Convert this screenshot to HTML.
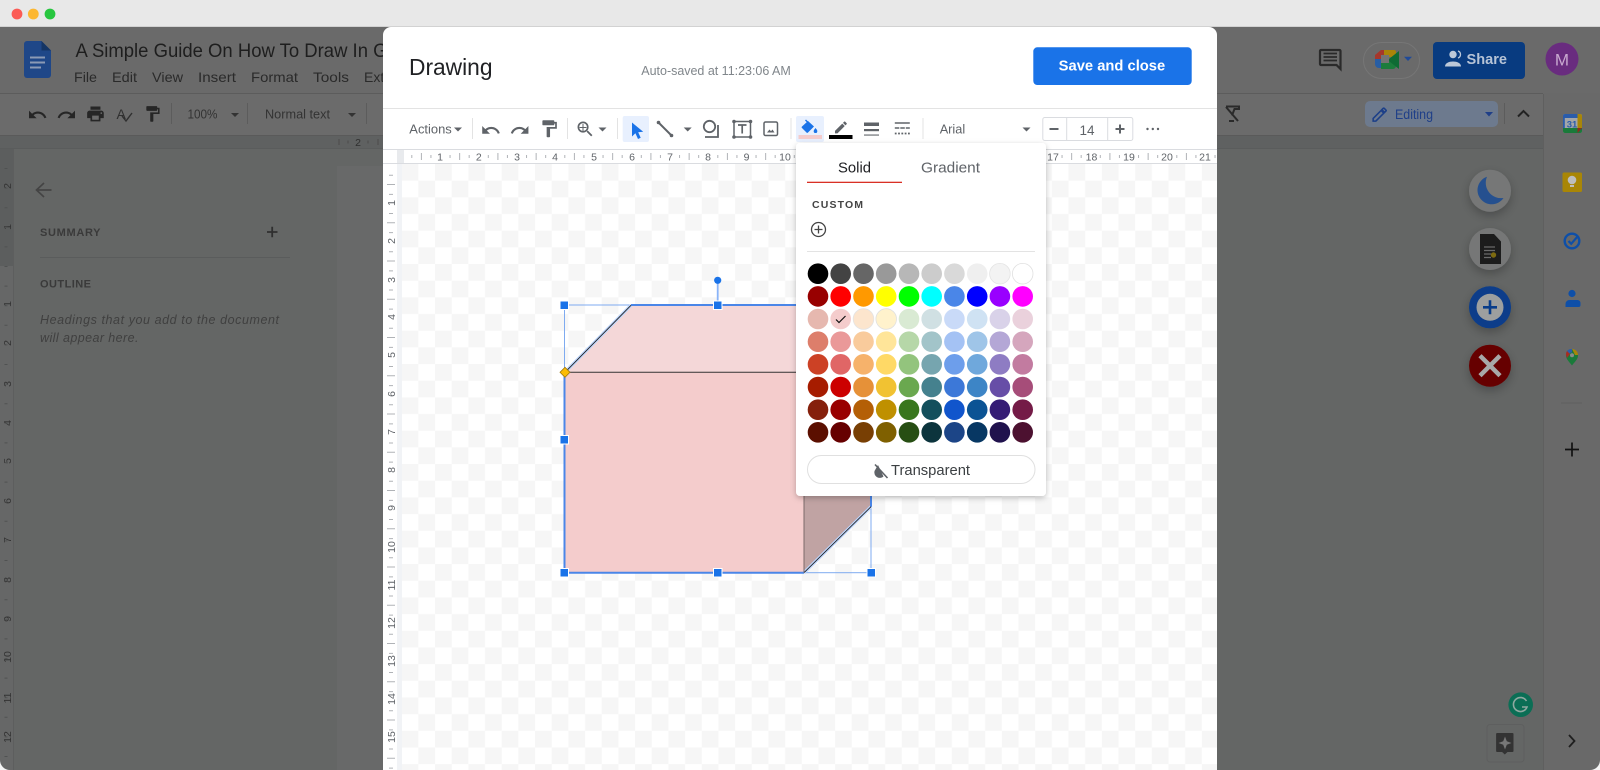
<!DOCTYPE html>
<html><head><meta charset="utf-8"><title>Drawing</title>
<style>
html,body{margin:0;padding:0;background:#646665;width:1600px;height:770px;overflow:hidden}
svg{display:block;font-family:"Liberation Sans",Arial,sans-serif}
.s circle{r:10.3px}
.rn text{font-size:10.5px;fill:#5f6368;text-anchor:middle}
.rd text{font-size:10.5px;fill:#333;text-anchor:middle}
</style></head><body>
<svg width="1600" height="770" viewBox="0 0 1600 770" xmlns="http://www.w3.org/2000/svg">
<defs>
<pattern id="chk" x="401.7" y="164" width="33.34" height="33.34" patternUnits="userSpaceOnUse">
<rect width="33.34" height="33.34" fill="#fff"/><rect width="16.67" height="16.67" fill="#f6f6f6"/><rect x="16.67" y="16.67" width="16.67" height="16.67" fill="#f6f6f6"/>
</pattern>
<filter id="sh" x="-20%" y="-20%" width="140%" height="140%"><feDropShadow dx="0" dy="2" stdDeviation="3" flood-color="#000" flood-opacity=".25"/></filter>
<filter id="sh2" x="-40%" y="-40%" width="180%" height="180%"><feDropShadow dx="0" dy="4" stdDeviation="5" flood-color="#000" flood-opacity=".25"/></filter>
</defs>

<!-- background docs -->
<rect width="1600" height="770" fill="#646665"/>
<rect y="27" width="1600" height="66" fill="#6a6a6a"/>
<rect y="93" width="1600" height="42" fill="#6b6b6b"/>
<rect y="93" width="1600" height="1" fill="#5c5c5c"/>
<rect y="135" width="1543" height="13" fill="#5f6161"/>
<rect y="135" width="1543" height="1" fill="#5a5a5a"/>
<rect y="148" width="1543" height="1" fill="#5a5c5c"/>
<rect x="1543" y="93" width="57" height="677" fill="#696969"/>
<rect x="1543" y="94" width="1" height="676" fill="#5f5f5f"/>
<rect y="149" width="13" height="621" fill="#666767"/>
<rect y="149" width="13" height="117" fill="#5c5e5e"/>
<rect x="13" y="149" width="1" height="621" fill="#5d5e5e"/>
<rect x="337" y="166" width="60" height="604" fill="#686969"/>

<!-- window bar -->
<rect width="1600" height="26" fill="#e8e8e8"/>
<rect y="26" width="1600" height="1" fill="#d2d2d2"/>
<circle cx="17" cy="14" r="5.4" fill="#fb5b55"/><circle cx="33.3" cy="14" r="5.4" fill="#fcb731"/><circle cx="50" cy="14" r="5.4" fill="#27c63f"/>

<!-- docs logo -->
<path d="M27 41h14.500L51 50.500V75a3 3 0 0 1-3 3H27a3 3 0 0 1-3-3V44a3 3 0 0 1 3-3z" fill="#1f4788"/>
<path d="M41.500 41L51 50.500h-9.500z" fill="#153564"/>
<path d="M30 56.500h15v2H30zM30 61.500h15v2H30zM30 66.500h11v2H30z" fill="#8b9ab5"/>

<!-- docs title / menus -->
<text x="75.500" y="57" font-size="19.500" fill="#1e1e1e" textLength="312" lengthAdjust="spacingAndGlyphs">A Simple Guide On How To Draw In G</text>
<g font-size="14" fill="#2a2a2a">
<text x="74" y="82" textLength="23" lengthAdjust="spacingAndGlyphs">File</text>
<text x="112" y="82" textLength="25" lengthAdjust="spacingAndGlyphs">Edit</text>
<text x="152" y="82" textLength="31" lengthAdjust="spacingAndGlyphs">View</text>
<text x="198" y="82" textLength="38" lengthAdjust="spacingAndGlyphs">Insert</text>
<text x="251" y="82" textLength="47" lengthAdjust="spacingAndGlyphs">Format</text>
<text x="313" y="82" textLength="36" lengthAdjust="spacingAndGlyphs">Tools</text>
<text x="364" y="82">Ext</text>
</g>

<!-- docs toolbar -->
<g fill="#262626">
<path transform="translate(27.300,104.700) scale(.85)" d="M12.500 8c-2.650 0-5.050.99-6.900 2.600L2 7v9h9l-3.620-3.620c1.390-1.160 3.160-1.880 5.120-1.880 3.540 0 6.550 2.310 7.600 5.500l2.370-.78C21.080 11.030 17.150 8 12.500 8z"/>
<path transform="translate(56.300,104.700) scale(.85)" d="M18.400 10.600C16.550 8.990 14.150 8 11.500 8c-4.650 0-8.580 3.030-9.960 7.220L3.900 16c1.050-3.190 4.050-5.500 7.600-5.500 1.950 0 3.730.72 5.120 1.880L13 16h9V7l-3.600 3.600z"/>
<path transform="translate(85.500,104) scale(.83)" d="M19 8H5c-1.660 0-3 1.340-3 3v6h4v4h12v-4h4v-6c0-1.660-1.340-3-3-3zm-3 11H8v-5h8v5zm3-7c-.55 0-1-.45-1-1s.45-1 1-1 1 .45 1 1-.45 1-1 1zm-1-9H6v4h12V3z"/>
<path transform="translate(143.200,104.600) scale(.78)" d="M18 4V3c0-.55-.45-1-1-1H5c-.55 0-1 .45-1 1v4c0 .55.45 1 1 1h12c.55 0 1-.45 1-1V6h1v4H9v11c0 .55.45 1 1 1h2c.55 0 1-.45 1-1v-9h8V4h-3z"/>
</g>
<text x="116.500" y="119" font-size="14" fill="#303030">A</text>
<path d="M122 116l4 5 6-8" fill="none" stroke="#303030" stroke-width="1.400"/>
<rect x="171" y="103" width="1" height="21" fill="#5c5c5c"/>
<rect x="247" y="103" width="1" height="21" fill="#5c5c5c"/>
<rect x="366" y="103" width="1" height="21" fill="#5c5c5c"/>
<text x="187.500" y="118.500" font-size="12.500" fill="#333" textLength="30" lengthAdjust="spacingAndGlyphs">100%</text>
<text x="265" y="118.500" font-size="12.500" fill="#333" textLength="65" lengthAdjust="spacingAndGlyphs">Normal text</text>
<path d="M231 113h8l-4 4zM348 113h8l-4 4z" fill="#333"/>
<text x="358" y="146" font-size="10.500" fill="#2f2f2f" text-anchor="middle">2</text>
<path d="M339 139v6M348 140.500v3M368 140.500v3M378 139v6" stroke="#4c4c4c" stroke-width="1"/>

<!-- left panel -->
<path d="M51.500 190H37M44 183l-7.500 7 7.500 7" fill="none" stroke="#444" stroke-width="1.700"/>
<text x="40" y="236" font-size="11" font-weight="bold" fill="#3a3a3a" textLength="60.500" lengthAdjust="spacing">SUMMARY</text>
<path d="M267 232h10.500M272.200 226.700v10.600" stroke="#2f2f2f" stroke-width="1.800"/>
<rect x="40" y="257" width="250" height="1" fill="#5a5c5c"/>
<text x="40" y="287.500" font-size="11" font-weight="bold" fill="#3a3a3a" textLength="51" lengthAdjust="spacing">OUTLINE</text>
<text x="40" y="324" font-size="12.500" font-style="italic" fill="#404040" textLength="239" lengthAdjust="spacing">Headings that you add to the document</text>
<text x="40" y="342" font-size="12.500" font-style="italic" fill="#404040" textLength="98.500" lengthAdjust="spacing">will appear here.</text>

<!-- left ruler -->
<g class="rd">
<text transform="translate(11,186) rotate(-90)">2</text>
<text transform="translate(11,227) rotate(-90)">1</text>
<text transform="translate(11,304) rotate(-90)">1</text>
<text transform="translate(11,343) rotate(-90)">2</text>
<text transform="translate(11,384) rotate(-90)">3</text>
<text transform="translate(11,423) rotate(-90)">4</text>
<text transform="translate(11,461) rotate(-90)">5</text>
<text transform="translate(11,501) rotate(-90)">6</text>
<text transform="translate(11,540) rotate(-90)">7</text>
<text transform="translate(11,580) rotate(-90)">8</text>
<text transform="translate(11,619) rotate(-90)">9</text>
<text transform="translate(11,657) rotate(-90)">10</text>
<text transform="translate(11,698) rotate(-90)">11</text>
<text transform="translate(11,737) rotate(-90)">12</text>
</g>
<path d="M6 168V770" stroke="#505252" stroke-width="3" stroke-dasharray="1 18.600" fill="none"/>

<!-- right top header -->
<path d="M1321 50h18.500a1 1 0 0 1 1 1v18l-4-4H1321a1 1 0 0 1-1-1v-13a1 1 0 0 1 1-1z" fill="none" stroke="#2a2a2a" stroke-width="2.200"/>
<path d="M1323.500 53.500h13.500M1323.500 57h13.500M1323.500 60.500h13.500" stroke="#2a2a2a" stroke-width="1.700"/>
<rect x="1363.500" y="42.500" width="56" height="36" rx="18" fill="none" stroke="#767676"/>
<path d="M1384 50h10a2 2 0 0 1 2 2v5h-7v-2h-5z" fill="#aa8409"/>
<path d="M1375 59h6v9h-2a4 4 0 0 1-4-4z" fill="#285ea4"/>
<path d="M1375 55l6-5v9h-6z" fill="#a6372b"/>
<path d="M1381 50h3v5h-3z" fill="#a6372b"/>
<path d="M1381 69v-6h8v-3h7v6a3 3 0 0 1-3 3h-12z" fill="#1c7c3c"/>
<rect x="1381" y="55" width="8" height="8" fill="#747474"/>
<path d="M1389 59l10-8v18l-10-8z" fill="#0f6b34"/>
<path d="M1404 56.700h8l-4 4.300z" fill="#1f4a98"/>
<rect x="1433" y="42" width="92" height="37" rx="4" fill="#083b80"/>
<circle cx="1453" cy="54.500" r="3.700" fill="#bcc8d8"/>
<path d="M1445 66.500c0-3.500 4-5 8-5s8 1.500 8 5z" fill="#bcc8d8"/>
<path d="M1458 51a3.700 3.700 0 0 1 0 7" fill="none" stroke="#bcc8d8" stroke-width="1.300"/>
<text x="1466.500" y="64" font-size="15" font-weight="bold" fill="#b6c3d6" textLength="40.500" lengthAdjust="spacingAndGlyphs">Share</text>
<circle cx="1562" cy="59" r="16.500" fill="#692c7f"/>
<text x="1562" y="65.500" font-size="17" fill="#c9a9d0" text-anchor="middle">M</text>

<!-- right toolbar -->
<path d="M1226 106.500h13v2.500h-4.500l-2.500 6.500M1226 107l12 14M1229 121h5" fill="none" stroke="#2a2a2a" stroke-width="2"/>
<rect x="1365" y="101" width="133" height="26" rx="5" fill="#6d7a8e"/>
<path transform="translate(1371,106) scale(.72)" d="M3 17.250V21h3.750L17.810 9.940l-3.750-3.750L3 17.250zM20.710 7.040c.39-.39.39-1.020 0-1.410l-2.340-2.340c-.39-.39-1.020-.39-1.410 0l-1.830 1.830 3.750 3.750 1.830-1.830z" fill="none" stroke="#1c3f88" stroke-width="2.200"/>
<text x="1395" y="119" font-size="13.500" fill="#1f3f88" textLength="38" lengthAdjust="spacingAndGlyphs">Editing</text>
<path d="M1485 112h8l-4 4.500z" fill="#1f3f88"/>
<rect x="1504" y="103" width="1" height="21" fill="#5c5c5c"/>
<path d="M1518 116.500l5.500-5.500 5.500 5.500" fill="none" stroke="#222" stroke-width="2"/>

<!-- floating buttons -->
<circle cx="1490" cy="190.700" r="21" fill="#767777" filter="url(#sh2)"/>
<path d="M1487 176.700A14.200 14.200 0 1 0 1503.500 198A15.400 15.400 0 0 1 1487 176.700z" fill="#25508f"/>
<circle cx="1490" cy="249" r="21" fill="#767777" filter="url(#sh2)"/>
<path d="M1480 234h14l7 7.500V264h-21z" fill="#1c1c1c"/>
<path d="M1484 247h11M1484 250.500h11M1484 254h7M1484 257.500h7" stroke="#6a6a6a" stroke-width="1.300"/>
<circle cx="1493.500" cy="255" r="2.700" fill="#7d6a10"/>
<circle cx="1490" cy="307.300" r="21" fill="#083c8a" filter="url(#sh2)"/>
<circle cx="1490" cy="307.300" r="13.500" fill="#9d9f9f"/>
<path d="M1483 307.300h14M1490 300.300v14" stroke="#083c8a" stroke-width="2.600"/>
<circle cx="1490" cy="365.700" r="21" fill="#660404" filter="url(#sh2)"/>
<path d="M1480 355.700l20 20M1500 355.700l-20 20" stroke="#a8a8a8" stroke-width="4.500"/>

<!-- right side apps -->
<rect x="1563" y="114" width="19" height="19" rx="2" fill="#a3a6a8"/>
<path d="M1563 116a2 2 0 0 1 2-2h15l-.2 4h-15v11h-1.800z" fill="#2a5caa"/>
<path d="M1563 128h19v3a2 2 0 0 1-2 2h-15a2 2 0 0 1-2-2z" fill="#1a7a3a"/>
<path d="M1577.500 114h2.500a2 2 0 0 1 2 2v12h-4.500z" fill="#a88608"/>
<path d="M1577.500 133v-5h4.500z" fill="#8f2a20"/>
<text x="1572" y="127.500" font-size="9.500" font-weight="bold" fill="#2a5caa" text-anchor="middle">31</text>
<rect x="1562.500" y="172.500" width="19.500" height="19.500" rx="1.500" fill="#a98606"/>
<circle cx="1572" cy="180" r="4.300" fill="#bdbdbd"/><rect x="1570" y="185" width="4" height="2" fill="#bdbdbd"/>
<circle cx="1572" cy="241" r="7.300" fill="none" stroke="#0e4fa8" stroke-width="2.400"/>
<path d="M1568.500 241l2.700 2.800 6.800-7.800" fill="none" stroke="#0e4fa8" stroke-width="2.200"/>
<circle cx="1572" cy="293.500" r="3.600" fill="#0e4fa8"/>
<path d="M1565.500 307v-3a4 4 0 0 1 4-4h8a3 3 0 0 1 3 3v2a2 2 0 0 1-2 2z" fill="#0e4fa8"/>
<path d="M1572 365.500c-2-3-6-6-6-10a6 6 0 0 1 12 0c0 4-4 7-6 10z" fill="#1a7a3a"/>
<path d="M1567 351a6 6 0 0 1 5-2v3.500a3 3 0 0 0-3 2z" fill="#2a5caa"/>
<path d="M1566 355a6 6 0 0 1 1-4l3 3-3 4z" fill="#a62c24"/>
<path d="M1572 349a6 6 0 0 1 6 6h-3z" fill="#a88608"/>
<circle cx="1572" cy="355.300" r="2" fill="#8a8a8a"/>
<rect x="1561" y="402.500" width="21" height="1" fill="#606060"/>
<path d="M1565 449.500h14M1572 442.500v14" stroke="#111" stroke-width="1.700"/>
<path d="M1569 735l5.500 6-5.500 6" fill="none" stroke="#1f1f1f" stroke-width="1.800"/>

<!-- grammarly + assist -->
<circle cx="1520.700" cy="704.700" r="12.300" fill="#0b6e55"/>
<path d="M1526.500 701a7 7 0 1 0 .5 6h-5" fill="none" stroke="#8fa8a0" stroke-width="1.600"/>
<rect x="1487" y="724.500" width="37" height="37.500" rx="3" fill="none" stroke="#5e5f5f"/>
<path d="M1497 733h15.500a1 1 0 0 1 1 1v17a1 1 0 0 1-1 1h-5l-2.700 2.500-2.700-2.500h-5a1 1 0 0 1-1-1v-17a1 1 0 0 1 1-1z" fill="#333"/>
<path d="M1505 736.500l1.800 4.700 4.700 1.800-4.700 1.800-1.800 4.700-1.800-4.700-4.700-1.800 4.700-1.800z" fill="#777"/>

<!-- bottom corners -->
<path d="M0 760a10 10 0 0 0 10 10H0z" fill="#f5f5f5"/>
<path d="M1600 760a10 10 0 0 1-10 10h10z" fill="#f5f5f5"/>

<!-- DIALOG -->
<path d="M391 27h818a8 8 0 0 1 8 8v735H383V35a8 8 0 0 1 8-8z" fill="#fff"/>
<text x="409" y="75" font-size="23" fill="#202124" textLength="83.500" lengthAdjust="spacingAndGlyphs">Drawing</text>
<text x="641.300" y="75" font-size="12.500" fill="#80868b" textLength="149.500" lengthAdjust="spacing">Auto-saved at 11:23:06 AM</text>
<rect x="1033.300" y="47.300" width="158.400" height="37.700" rx="4" fill="#1a73e8"/>
<text x="1058.700" y="70.700" font-size="14.500" font-weight="bold" fill="#fff" textLength="106.500" lengthAdjust="spacingAndGlyphs">Save and close</text>
<rect x="383" y="108" width="834" height="1" fill="#e3e3e3"/>

<!-- drawing toolbar -->
<text x="409.300" y="133.500" font-size="13" fill="#5f6368" textLength="42.500" lengthAdjust="spacingAndGlyphs">Actions</text>
<g fill="#5f6368">
<path d="M454 127.500h8l-4 4z"/>
<path transform="translate(480.500,120) scale(.86)" d="M12.500 8c-2.650 0-5.050.99-6.900 2.600L2 7v9h9l-3.620-3.620c1.390-1.160 3.160-1.880 5.120-1.880 3.540 0 6.550 2.310 7.600 5.500l2.370-.78C21.080 11.030 17.150 8 12.500 8z"/>
<path transform="translate(509.500,120) scale(.86)" d="M18.400 10.600C16.550 8.990 14.150 8 11.500 8c-4.650 0-8.580 3.030-9.960 7.220L3.900 16c1.050-3.190 4.050-5.500 7.600-5.500 1.950 0 3.730.72 5.120 1.880L13 16h9V7l-3.600 3.600z"/>
<path transform="translate(539,118.500) scale(.85)" d="M18 4V3c0-.55-.45-1-1-1H5c-.55 0-1 .45-1 1v4c0 .55.45 1 1 1h12c.55 0 1-.45 1-1V6h1v4H9v11c0 .55.45 1 1 1h2c.55 0 1-.45 1-1v-9h8V4h-3z"/>
<path transform="translate(575,119) scale(.85)" d="M15.500 14h-.79l-.28-.27C15.410 12.590 16 11.110 16 9.500 16 5.910 13.090 3 9.500 3S3 5.910 3 9.500 5.910 16 9.500 16c1.610 0 3.090-.59 4.230-1.570l.27.28v.79l5 4.990L20.490 19l-4.990-5zm-6 0C7.010 14 5 11.990 5 9.500S7.010 5 9.500 5 14 7.010 14 9.500 11.990 14 9.500 14z"/>
<path d="M598.500 127.500h8l-4 4zM683.700 127.500h8l-4 4z"/>
</g>
<path d="M583 124v7M579.500 127.500h7" stroke="#5f6368" stroke-width="1" fill="none"/>
<rect x="472" y="118" width="1" height="21" fill="#e3e3e3"/>
<rect x="567" y="118" width="1" height="21" fill="#e3e3e3"/>
<rect x="617" y="118" width="1" height="21" fill="#e3e3e3"/>
<rect x="790.500" y="118" width="1" height="21" fill="#e3e3e3"/>
<rect x="922.500" y="118" width="1" height="21" fill="#e3e3e3"/>
<rect x="622.700" y="116" width="26.300" height="26" rx="2" fill="#e8f0fe"/>
<path d="M632 122.500V136.500l3.400-3.300 2.600 5.800 2.700-1.200-2.500-5.600 5-.4z" fill="#1a73e8"/>
<path d="M658.500 122.500l13 13" stroke="#5f6368" stroke-width="2"/>
<circle cx="658.500" cy="122.500" r="1.800" fill="#5f6368"/><circle cx="671.500" cy="135.500" r="1.800" fill="#5f6368"/>
<circle cx="709.500" cy="126.500" r="5.700" fill="none" stroke="#5f6368" stroke-width="1.800"/>
<path d="M718 125v12h-13" fill="none" stroke="#5f6368" stroke-width="1.800"/>
<rect x="734" y="121.500" width="16.500" height="15.500" fill="none" stroke="#5f6368" stroke-width="1.500"/>
<g fill="#5f6368"><circle cx="734" cy="121.500" r="1.800"/><circle cx="750.500" cy="121.500" r="1.800"/><circle cx="734" cy="137" r="1.800"/><circle cx="750.500" cy="137" r="1.800"/></g>
<path d="M738 125h8.500M742.200 125v8.500" stroke="#5f6368" stroke-width="1.700"/>
<rect x="764" y="122" width="13.500" height="13.500" rx="1.500" fill="none" stroke="#5f6368" stroke-width="1.500"/>
<path d="M767 132.500l2.500-3 1.500 1.700 1.500-1.700 2 3z" fill="#5f6368"/>
<rect x="796" y="116" width="28" height="26" rx="2" fill="#e8f0fe"/>
<path d="M808 121l-6 5.500a1 1 0 0 0 0 1.500l4.500 4.500a1 1 0 0 0 1.500 0l6-6z" fill="#1a73e8"/>
<path d="M805.500 120l2.800 2.800" stroke="#1a73e8" stroke-width="1.400"/>
<path d="M815.500 128c-1.200 1.400-1.800 2.300-1.800 3.200a1.800 1.800 0 0 0 3.600 0c0-.9-.6-1.800-1.800-3.200z" fill="#1a73e8"/>
<rect x="798.500" y="135" width="23.500" height="4" fill="#f4cccc"/>
<path transform="translate(833,119.500) scale(.66)" d="M3 17.250V21h3.750L17.810 9.940l-3.750-3.750L3 17.250zM20.710 7.040c.39-.39.39-1.020 0-1.410l-2.340-2.340c-.39-.39-1.020-.39-1.410 0l-1.830 1.830 3.750 3.750 1.830-1.830z" fill="#5f6368"/>
<rect x="829" y="135" width="23.500" height="4" fill="#000"/>
<rect x="864" y="122.500" width="15" height="3.500" fill="#5f6368"/>
<rect x="864" y="129" width="15" height="2.200" fill="#5f6368"/>
<rect x="864" y="134.500" width="15" height="1.100" fill="#5f6368"/>
<path d="M894.800 123h15" stroke="#5f6368" stroke-width="1.500"/>
<path d="M894.800 128h15" stroke="#5f6368" stroke-width="1.600" stroke-dasharray="4.500 1"/>
<path d="M894.800 133.500h15" stroke="#5f6368" stroke-width="1.700" stroke-dasharray="1.800 1.500"/>
<text x="939.700" y="133.500" font-size="13" fill="#5f6368" textLength="25.500" lengthAdjust="spacingAndGlyphs">Arial</text>
<path d="M1022.500 127.500h8l-4 4z" fill="#5f6368"/>
<rect x="1042.800" y="117.500" width="90" height="23" rx="2" fill="#fff" stroke="#dadce0"/>
<path d="M1066.700 117.500v23M1107.700 117.500v23" stroke="#dadce0"/>
<path d="M1049.500 129h9" stroke="#5f6368" stroke-width="2"/>
<path d="M1115.500 129h9M1120 124.500v9" stroke="#5f6368" stroke-width="2"/>
<text x="1087" y="135" font-size="13.500" fill="#5f6368" text-anchor="middle">14</text>
<g fill="#5f6368"><circle cx="1147.500" cy="129" r="1.200"/><circle cx="1152.800" cy="129" r="1.200"/><circle cx="1158" cy="129" r="1.200"/></g>

<!-- rulers -->
<rect x="383" y="149" width="834" height="1" fill="#dadce0"/>
<rect x="383" y="163" width="834" height="1" fill="#dadce0"/>
<rect x="397" y="150" width="7" height="13" fill="#e8eaed"/>
<rect x="397" y="164" width="5" height="606" fill="#f1f3f6"/>
<rect x="402" y="164" width="815" height="606" fill="url(#chk)"/>
<path d="M411.300 156.500H1217" stroke="#b0b3b7" stroke-width="3" stroke-dasharray="1 18.125"/>
<path d="M420.900 156.500H1217" stroke="#b0b3b7" stroke-width="7" stroke-dasharray="1 37.250"/>
<g class="rn">
<text x="440" y="160.500">1</text><text x="478.800" y="160.500">2</text>
<text x="517" y="160.500">3</text><text x="555" y="160.500">4</text>
<text x="594" y="160.500">5</text><text x="632" y="160.500">6</text>
<text x="670" y="160.500">7</text><text x="708" y="160.500">8</text>
<text x="746.500" y="160.500">9</text><text x="785" y="160.500">10</text>
<text x="1053" y="160.500">17</text><text x="1091.500" y="160.500">18</text>
<text x="1129" y="160.500">19</text><text x="1167" y="160.500">20</text>
<text x="1205" y="160.500">21</text>
</g>
<path d="M391 174.800V770" stroke="#b0b3b7" stroke-width="4" stroke-dasharray="1 18.125"/>
<path d="M391 184V770" stroke="#b0b3b7" stroke-width="8" stroke-dasharray="1 37.250"/>
<g class="rn">
<text transform="translate(395,203) rotate(-90)">1</text>
<text transform="translate(395,241) rotate(-90)">2</text>
<text transform="translate(395,280) rotate(-90)">3</text>
<text transform="translate(395,317) rotate(-90)">4</text>
<text transform="translate(395,355) rotate(-90)">5</text>
<text transform="translate(395,394) rotate(-90)">6</text>
<text transform="translate(395,432) rotate(-90)">7</text>
<text transform="translate(395,470) rotate(-90)">8</text>
<text transform="translate(395,508) rotate(-90)">9</text>
<text transform="translate(395,547) rotate(-90)">10</text>
<text transform="translate(395,585) rotate(-90)">11</text>
<text transform="translate(395,623) rotate(-90)">12</text>
<text transform="translate(395,661) rotate(-90)">13</text>
<text transform="translate(395,699) rotate(-90)">14</text>
<text transform="translate(395,737) rotate(-90)">15</text>
</g>

<!-- shape -->
<rect x="564.500" y="305" width="306.500" height="267.700" fill="none" stroke="#7fabf0" stroke-width="1"/>
<path d="M717.700 281v24" stroke="#8ab4f8" stroke-width="1.800"/>
<path d="M565 372.300L631 305.300H871L804 372.300z" fill="#f4d7d8"/>
<path d="M565 372.300H804V572.700H565z" fill="#f4cccc"/>
<path d="M804 372.300L871 305.300V506.700L804 572.700z" fill="#c0a3a3"/>
<path d="M565 372.300L631 305.300" stroke="#bcd4fb" stroke-width="3.200"/>
<path d="M804 572.700L871 506.700" stroke="#bcd4fb" stroke-width="3.200"/>
<path d="M631 305H871V506.700M804 572.700H564.500V372.300" fill="none" stroke="#4a86e8" stroke-width="2"/>
<path d="M565 372.300L631 305.300M804 572.700L871 506.700" stroke="#1a1a1a" stroke-width=".8"/>
<path d="M565 372.300H804" stroke="#333" stroke-width="1"/>
<path d="M804 372.300V572.700" stroke="#7b6a6a" stroke-width="1"/>
<g fill="#1a73e8" stroke="#fff" stroke-width="1">
<rect x="560" y="301" width="8.500" height="8.500"/><rect x="713.500" y="301" width="8.500" height="8.500"/>
<rect x="560" y="435.500" width="8.500" height="8.500"/>
<rect x="560" y="568.500" width="8.500" height="8.500"/><rect x="713.500" y="568.500" width="8.500" height="8.500"/><rect x="867" y="568.500" width="8.500" height="8.500"/>
</g>
<circle cx="717.700" cy="280.300" r="3.600" fill="#1a73e8"/>
<path d="M565 367.300l5 5-5 5-5-5z" fill="#fbbc04" stroke="#a07a10" stroke-width=".8"/>

<!-- popup -->
<rect x="796" y="143" width="250" height="353" rx="4" fill="#fff" filter="url(#sh)"/>
<text x="838" y="172.700" font-size="14.500" fill="#202124" textLength="33" lengthAdjust="spacingAndGlyphs">Solid</text>
<text x="921" y="172.700" font-size="14.500" fill="#5f6368" textLength="59" lengthAdjust="spacingAndGlyphs">Gradient</text>
<rect x="807" y="181.700" width="95" height="1.300" fill="#d93025"/>
<text x="812" y="208" font-size="10.500" font-weight="bold" fill="#444" textLength="51" lengthAdjust="spacing">CUSTOM</text>
<circle cx="818.500" cy="229.500" r="7" fill="none" stroke="#444" stroke-width="1.300"/>
<path d="M814.500 229.500h8M818.500 225.500v8" stroke="#444" stroke-width="1.300"/>
<rect x="807" y="251" width="228" height="1" fill="#e3e3e3"/>

<g class="s">
<circle cx="818" cy="273.700" fill="#000"/><circle cx="840.700" cy="273.700" fill="#434343"/><circle cx="863.500" cy="273.700" fill="#666"/><circle cx="886.200" cy="273.700" fill="#999"/><circle cx="909" cy="273.700" fill="#b7b7b7"/><circle cx="931.700" cy="273.700" fill="#ccc"/><circle cx="954.400" cy="273.700" fill="#d9d9d9"/><circle cx="977.200" cy="273.700" fill="#efefef"/><circle cx="999.900" cy="273.700" fill="#f3f3f3" stroke="#e4e4e4" stroke-width=".8"/><circle cx="1022.700" cy="273.700" fill="#fff" stroke="#e0e0e0" stroke-width=".8"/>
<circle cx="818" cy="296.400" fill="#980000"/><circle cx="840.700" cy="296.400" fill="#f00"/><circle cx="863.500" cy="296.400" fill="#f90"/><circle cx="886.200" cy="296.400" fill="#ff0"/><circle cx="909" cy="296.400" fill="#0f0"/><circle cx="931.700" cy="296.400" fill="#0ff"/><circle cx="954.400" cy="296.400" fill="#4a86e8"/><circle cx="977.200" cy="296.400" fill="#00f"/><circle cx="999.900" cy="296.400" fill="#90f"/><circle cx="1022.700" cy="296.400" fill="#f0f"/>
<circle cx="818" cy="319" fill="#e6b8af"/><circle cx="840.700" cy="319" fill="#f4cccc"/><circle cx="863.500" cy="319" fill="#fce5cd" stroke="#e4e4e4" stroke-width=".8"/><circle cx="886.200" cy="319" fill="#fff2cc" stroke="#e0e0e0" stroke-width=".8"/><circle cx="909" cy="319" fill="#d9ead3"/><circle cx="931.700" cy="319" fill="#d0e0e3"/><circle cx="954.400" cy="319" fill="#c9daf8"/><circle cx="977.200" cy="319" fill="#cfe2f3"/><circle cx="999.900" cy="319" fill="#d9d2e9"/><circle cx="1022.700" cy="319" fill="#ead1dc"/>
<circle cx="818" cy="341.700" fill="#dd7e6b"/><circle cx="840.700" cy="341.700" fill="#ea9999"/><circle cx="863.500" cy="341.700" fill="#f9cb9c"/><circle cx="886.200" cy="341.700" fill="#ffe599"/><circle cx="909" cy="341.700" fill="#b6d7a8"/><circle cx="931.700" cy="341.700" fill="#a2c4c9"/><circle cx="954.400" cy="341.700" fill="#a4c2f4"/><circle cx="977.200" cy="341.700" fill="#9fc5e8"/><circle cx="999.900" cy="341.700" fill="#b4a7d6"/><circle cx="1022.700" cy="341.700" fill="#d5a6bd"/>
<circle cx="818" cy="364.300" fill="#cc4125"/><circle cx="840.700" cy="364.300" fill="#e06666"/><circle cx="863.500" cy="364.300" fill="#f6b26b"/><circle cx="886.200" cy="364.300" fill="#ffd966"/><circle cx="909" cy="364.300" fill="#93c47d"/><circle cx="931.700" cy="364.300" fill="#76a5af"/><circle cx="954.400" cy="364.300" fill="#6d9eeb"/><circle cx="977.200" cy="364.300" fill="#6fa8dc"/><circle cx="999.900" cy="364.300" fill="#8e7cc3"/><circle cx="1022.700" cy="364.300" fill="#c27ba0"/>
<circle cx="818" cy="387" fill="#a61c00"/><circle cx="840.700" cy="387" fill="#c00"/><circle cx="863.500" cy="387" fill="#e69138"/><circle cx="886.200" cy="387" fill="#f1c232"/><circle cx="909" cy="387" fill="#6aa84f"/><circle cx="931.700" cy="387" fill="#45818e"/><circle cx="954.400" cy="387" fill="#3c78d8"/><circle cx="977.200" cy="387" fill="#3d85c6"/><circle cx="999.900" cy="387" fill="#674ea7"/><circle cx="1022.700" cy="387" fill="#a64d79"/>
<circle cx="818" cy="409.700" fill="#85200c"/><circle cx="840.700" cy="409.700" fill="#900"/><circle cx="863.500" cy="409.700" fill="#b45f06"/><circle cx="886.200" cy="409.700" fill="#bf9000"/><circle cx="909" cy="409.700" fill="#38761d"/><circle cx="931.700" cy="409.700" fill="#134f5c"/><circle cx="954.400" cy="409.700" fill="#15c"/><circle cx="977.200" cy="409.700" fill="#0b5394"/><circle cx="999.900" cy="409.700" fill="#351c75"/><circle cx="1022.700" cy="409.700" fill="#741b47"/>
<circle cx="818" cy="432.300" fill="#5b0f00"/><circle cx="840.700" cy="432.300" fill="#600"/><circle cx="863.500" cy="432.300" fill="#783f04"/><circle cx="886.200" cy="432.300" fill="#7f6000"/><circle cx="909" cy="432.300" fill="#274e13"/><circle cx="931.700" cy="432.300" fill="#0c343d"/><circle cx="954.400" cy="432.300" fill="#1c4587"/><circle cx="977.200" cy="432.300" fill="#073763"/><circle cx="999.900" cy="432.300" fill="#20124d"/><circle cx="1022.700" cy="432.300" fill="#4c1130"/>
</g>
<path d="M836 319.500l3 3 6.500-6.500" fill="none" stroke="#111" stroke-width="1.200"/>

<rect x="807.500" y="455.500" width="227.500" height="28" rx="14" fill="#fff" stroke="#e0e0e0"/>
<path d="M878 465l-3.500 6a5.500 5.500 0 0 0 9 5.500z" fill="#5f6368"/>
<path d="M875 464.500l12.500 13.500" stroke="#5f6368" stroke-width="1.600"/>
<text x="891" y="475" font-size="14.500" fill="#3c4043" textLength="79" lengthAdjust="spacingAndGlyphs">Transparent</text>
</svg>
</body></html>
